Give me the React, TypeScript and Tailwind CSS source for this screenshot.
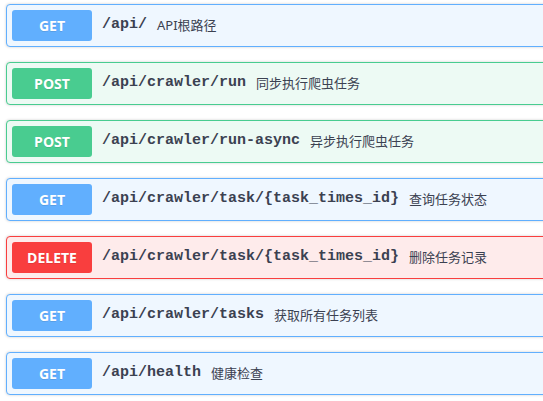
const endpoints = [
  { method: "GET", path: "/api/", desc: "API根路径" },
  { method: "POST", path: "/api/crawler/run", desc: "同步执行爬虫任务" },
  { method: "POST", path: "/api/crawler/run-async", desc: "异步执行爬虫任务" },
  { method: "GET", path: "/api/crawler/task/{task_times_id}", desc: "查询任务状态" },
  { method: "DELETE", path: "/api/crawler/task/{task_times_id}", desc: "删除任务记录" },
  { method: "GET", path: "/api/crawler/tasks", desc: "获取所有任务列表" },
  { method: "GET", path: "/api/health", desc: "健康检查" },
];

const styles: Record<string, { block: string; badge: string }> = {
  GET: { block: "border-[#61affe] bg-[#eff7ff]", badge: "bg-[#61affe]" },
  POST: { block: "border-[#49cc90] bg-[#edfaf4]", badge: "bg-[#49cc90]" },
  DELETE: { block: "border-[#f93e3e] bg-[#feebeb]", badge: "bg-[#f93e3e]" },
};

export default function App() {
  return (
    <div className="w-full h-[401px] overflow-hidden bg-white pt-[4px] pl-[6px]">
      <div className="flex flex-col gap-[15px] w-[600px]">
        {endpoints.map((e, i) => {
          const s = styles[e.method];
          return (
            <div
              key={i}
              className={`flex items-center h-[43px] border rounded-[4px] p-[5px] shadow-[0_0_3px_rgba(0,0,0,0.19)] ${s.block}`}
            >
              <span
                className={`w-[80px] h-[31px] flex items-center justify-center rounded-[3px] text-white text-[14px] font-bold [text-shadow:0_1px_0_rgba(0,0,0,0.1)] ${s.badge}`}
                style={{ fontFamily: '"Open Sans", "Noto Sans", sans-serif' }}
              >
                {e.method}
              </span>
              <span
                className="ml-[10px] text-[15px] font-bold text-[#3b4151] whitespace-nowrap"
                style={{ fontFamily: '"Liberation Mono", monospace' }}
              >
                {e.path}
              </span>
              <span
                className="ml-[10px] text-[13px] text-[#3b4151] whitespace-nowrap"
                style={{ fontFamily: '"Noto Sans", "Noto Sans CJK SC", sans-serif' }}
              >
                {e.desc}
              </span>
            </div>
          );
        })}
      </div>
    </div>
  );
}
